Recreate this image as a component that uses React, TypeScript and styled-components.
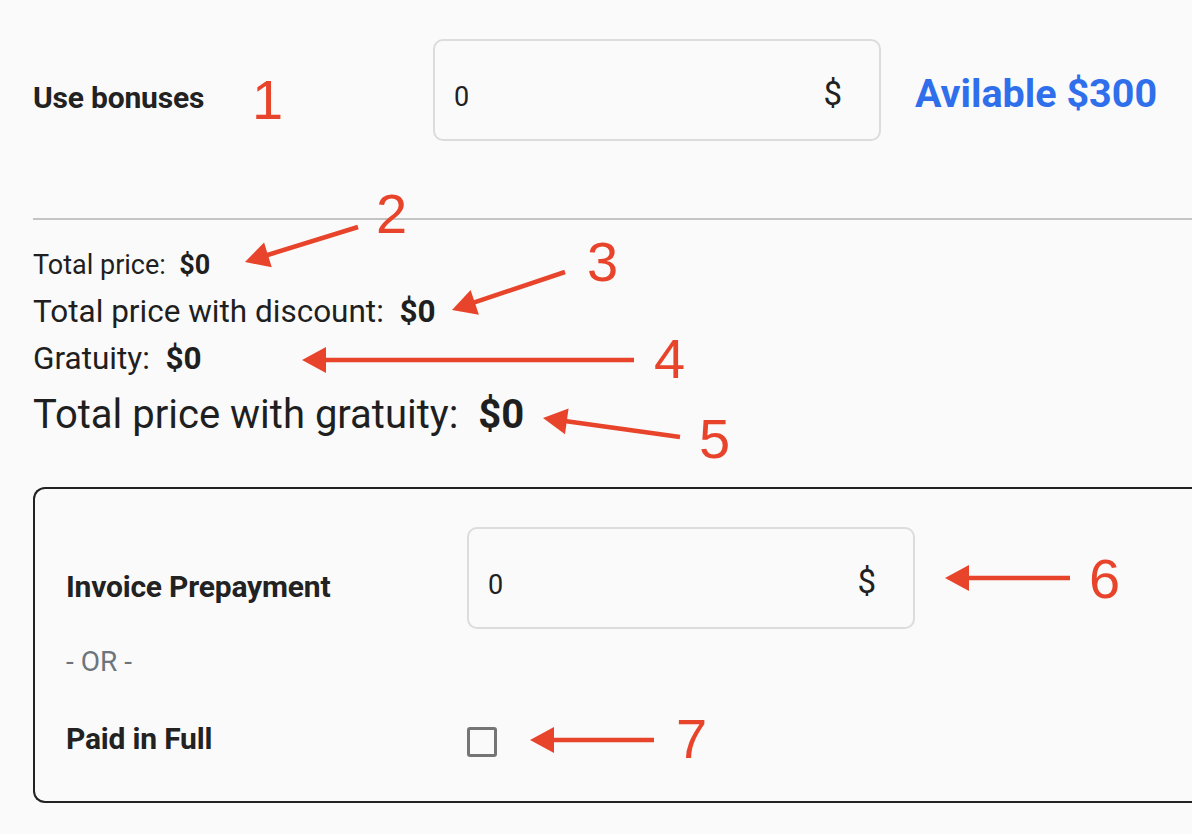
import React from "react";
import styled, { createGlobalStyle } from "styled-components";

const Global = createGlobalStyle`
  html, body { margin: 0; padding: 0; background: #fafafa; }
  body { font-family: Roboto, "Noto Sans", sans-serif; color: #212529; }
`;

const Page = styled.div`
  position: relative;
  width: 1192px;
  height: 834px;
  overflow: hidden;
  background: #fafafa;
  padding: 39px 0 0 33px;
  box-sizing: border-box;
`;

const Row = styled.div<{ $h: number }>`
  display: flex;
  align-items: center;
  height: ${(p) => p.$h}px;
`;

const Label = styled.div<{ $w: number; $shift?: number }>`
  width: ${(p) => p.$w}px;
  flex-shrink: 0;
  font-size: 30px;
  font-weight: 700;
  color: #222;
  letter-spacing: -0.2px;
  transform: translateY(${(p) => p.$shift ?? 0}px);
`;

const InputBox = styled.div<{ $shift?: number }>`
  width: 448px;
  height: 102px;
  box-sizing: border-box;
  border: 2px solid #dcdcdc;
  border-radius: 10px;
  display: flex;
  align-items: center;
  justify-content: space-between;
  padding: 0 37px 0 19px;
  font-size: 27px;
  color: #212121;
`;

const Value = styled.span<{ $shift: number }>`
  transform: translateY(${(p) => p.$shift}px);
`;

const Currency = styled.span<{ $shift: number }>`
  font-size: 33px;
  transform: translateY(${(p) => p.$shift}px);
`;

const Available = styled.div`
  margin-left: 34px;
  font-size: 39.5px;
  font-weight: 700;
  color: #2f6fec;
  transform: translateY(3px);
`;

const Divider = styled.hr`
  margin: 77px 0 0 0;
  border: none;
  border-top: 2px solid #c4c4c4;
`;

const Totals = styled.div`
  display: flex;
  flex-direction: column;
  margin-top: 22px;
`;

const TotalLine = styled.div<{ $size: number; $h: number }>`
  font-size: ${(p) => p.$size}px;
  height: ${(p) => p.$h}px;
  line-height: ${(p) => p.$h}px;
  color: #1f1f1f;
  white-space: pre;
  b { font-weight: 700; }
`;

const Card = styled.div`
  margin-top: 39px;
  border: 2px solid #222;
  border-right: none;
  border-radius: 12px 0 0 12px;
  height: 316px;
  box-sizing: border-box;
  padding: 38px 0 0 31px;
`;

const Or = styled.div`
  font-size: 28px;
  color: #6c757d;
  height: 66px;
  line-height: 66px;
`;

const Checkbox = styled.div`
  width: 30px;
  height: 30px;
  box-sizing: border-box;
  border: 3px solid #757575;
  border-radius: 3px;
`;

const Note = styled.div<{ $x: number; $y: number }>`
  position: absolute;
  left: ${(p) => p.$x}px;
  top: ${(p) => p.$y}px;
  font-family: "Liberation Sans", Arial, sans-serif;
  font-size: 56px;
  line-height: 1;
  color: #e8442b;
`;

const Overlay = styled.svg`
  position: absolute;
  left: 0;
  top: 0;
  pointer-events: none;
`;

function Arrow({ x1, y1, x2, y2 }: { x1: number; y1: number; x2: number; y2: number }) {
  const dx = x2 - x1;
  const dy = y2 - y1;
  const len = Math.hypot(dx, dy);
  const ux = dx / len;
  const uy = dy / len;
  const hl = 24;
  const hw = 13;
  const bx = x2 - ux * hl;
  const by = y2 - uy * hl;
  const px = -uy;
  const py = ux;
  return (
    <g>
      <line x1={x1} y1={y1} x2={bx + ux * 2} y2={by + uy * 2} stroke="#e8442b" strokeWidth={4.5} />
      <polygon
        points={`${x2},${y2} ${bx + px * hw},${by + py * hw} ${bx - px * hw},${by - py * hw}`}
        fill="#e8442b"
      />
    </g>
  );
}

function MoneyInput({ shift }: { shift: number }) {
  return (
    <InputBox>
      <Value $shift={shift}>0</Value>
      <Currency $shift={shift - 4}>$</Currency>
    </InputBox>
  );
}

export default function App() {
  return (
    <>
      <Global />
      <Page>
        <Row $h={102}>
          <Label $w={400} $shift={7}>Use bonuses</Label>
          <MoneyInput shift={7} />
          <Available>Avilable $300</Available>
        </Row>
        <Divider />
        <Totals>
          <TotalLine $size={27} $h={46}>
            {"Total price:  "}<b>$0</b>
          </TotalLine>
          <TotalLine $size={31.5} $h={48}>
            {"Total price with discount:  "}<b>$0</b>
          </TotalLine>
          <TotalLine $size={31.5} $h={46}>
            {"Gratuity:  "}<b>$0</b>
          </TotalLine>
          <TotalLine $size={40} $h={66}>
            {"Total price with gratuity:  "}<b>$0</b>
          </TotalLine>
        </Totals>
        <Card>
          <Row $h={102}>
            <Label $w={401} $shift={8}>Invoice Prepayment</Label>
            <MoneyInput shift={7} />
          </Row>
          <Or>- OR -</Or>
          <Row $h={94}>
            <Label $w={401} $shift={-4}>Paid in Full</Label>
            <Checkbox />
          </Row>
        </Card>
        <Note $x={252} $y={72}>1</Note>
        <Note $x={376} $y={186}>2</Note>
        <Note $x={587} $y={234}>3</Note>
        <Note $x={654} $y={331}>4</Note>
        <Note $x={699} $y={411}>5</Note>
        <Note $x={1089} $y={551}>6</Note>
        <Note $x={676} $y={711}>7</Note>
        <Overlay width={1192} height={834}>
          <Arrow x1={358} y1={227} x2={245} y2={262} />
          <Arrow x1={565} y1={272} x2={452} y2={310} />
          <Arrow x1={634} y1={360} x2={302} y2={360} />
          <Arrow x1={680} y1={437} x2={543} y2={418} />
          <Arrow x1={1070} y1={578} x2={945} y2={578} />
          <Arrow x1={654} y1={740} x2={530} y2={740} />
        </Overlay>
      </Page>
    </>
  );
}
